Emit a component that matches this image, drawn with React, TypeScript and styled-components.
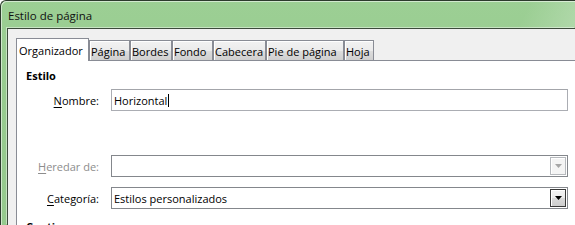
import React from "react";
import styled, { createGlobalStyle } from "styled-components";

const Global = createGlobalStyle`
  html, body { margin: 0; padding: 0; background: #ffffff; }
  body {
    font-family: "Open Sans", "Noto Sans", sans-serif;
    font-size: 11px;
    color: #000;
  }
  * { box-sizing: border-box; }
`;

const Window = styled.div`
  width: 575px;
  height: 225px;
  overflow: hidden;
  display: flex;
  flex-direction: column;
  border-top: 1px solid #2c3a2c;
  border-left: 1px solid #2c3a2c;
  border-top-left-radius: 6px;
  background:
    linear-gradient(115deg, rgba(255,255,255,0) 78%, rgba(255,255,255,0.25) 88%, rgba(255,255,255,0) 96%),
    linear-gradient(180deg, #9ccf94 0%, #97cb8f 40%, #95c98d 100%);
  box-shadow: inset 1px 1px 0 rgba(255, 255, 255, 0.55);
`;

const TitleBar = styled.div`
  height: 27px;
  display: flex;
  align-items: center;
  padding-left: 7px;
  padding-top: 1px;
  font-size: 11.5px;
  color: #101010;
  flex-shrink: 0;
`;

const Client = styled.div`
  flex: 1;
  margin-left: 6px;
  border-top: 1px solid #3c4b3b;
  border-left: 1px solid #3c4b3b;
  background: #f0f0f0;
  padding: 9px 0 0 8px;
  display: flex;
  flex-direction: column;
  min-height: 0;
  box-shadow: -1px -1px 0 rgba(255, 255, 255, 0.45);
`;

const TabRow = styled.div`
  display: flex;
  align-items: flex-end;
  height: 23px;
  border-bottom: 1px solid #898c95;
  flex-shrink: 0;
`;

const Tab = styled.div<{ $active?: boolean; $w: number }>`
  width: ${(p) => p.$w}px;
  height: ${(p) => (p.$active ? 23 : 20)}px;
  margin-bottom: ${(p) => (p.$active ? -1 : 0)}px;
  border: 1px solid #898c95;
  border-bottom: none;
  padding-left: ${(p) => (p.$active ? 2 : 1)}px;
  display: flex;
  align-items: center;
  white-space: nowrap;
  font-size: 11px;
  line-height: 15px;
  position: relative;
  z-index: ${(p) => (p.$active ? 1 : 0)};
  background: ${(p) =>
    p.$active
      ? "#ffffff"
      : "linear-gradient(180deg, #f2f2f2 0%, #ebebeb 50%, #dddddd 51%, #cfcfcf 100%)"};
  box-shadow: ${(p) => (p.$active ? "none" : "inset 1px 1px 0 #ffffff")};
  padding-top: ${(p) => (p.$active ? 0 : 1)}px;
`;

const Panel = styled.div`
  flex: 1;
  background: #ffffff;
  border-left: 1px solid #898c95;
  padding: 7px 7px 0 9px;
  display: flex;
  flex-direction: column;
`;

const Heading = styled.div<{ $mt?: number }>`
  font-weight: 700;
  font-size: 11px;
  line-height: 15px;
  margin-top: ${(p) => p.$mt ?? 0}px;
`;

const Row = styled.div<{ $mt: number }>`
  display: flex;
  align-items: center;
  margin-top: ${(p) => p.$mt}px;
  height: 22px;
`;

const Label = styled.div<{ $disabled?: boolean }>`
  width: 73px;
  margin-right: 12px;
  text-align: right;
  font-size: 11px;
  line-height: 15px;
  color: ${(p) => (p.$disabled ? "#8d8d8d" : "#000")};
  white-space: nowrap;
`;

const Key = styled.span`
  text-decoration: underline;
  text-underline-offset: 2px;
`;

const TextInput = styled.div`
  flex: 1;
  height: 22px;
  border: 1px solid #abadb3;
  border-top-color: #a3a5aa;
  display: flex;
  align-items: center;
  padding-left: 2px;
  font-size: 11px;
  line-height: 15px;
`;

const Caret = styled.span`
  display: inline-block;
  width: 1px;
  height: 13px;
  background: #000;
  margin-left: 1px;
`;

const Select = styled.div`
  flex: 1;
  height: 22px;
  border: 1px solid #84878c;
  display: flex;
  align-items: stretch;
  padding: 1px;
`;

const SelectText = styled.div`
  flex: 1;
  display: flex;
  align-items: center;
  padding-left: 1px;
  font-size: 11px;
  line-height: 15px;
`;

const DropButton = styled.div<{ $disabled?: boolean }>`
  width: 16px;
  display: flex;
  align-items: center;
  justify-content: center;
  border: 1px solid ${(p) => (p.$disabled ? "#b6b9bd" : "#3a3a3a")};
  background: ${(p) =>
    p.$disabled
      ? "#f4f4f4"
      : "linear-gradient(180deg, #f4f4f4 0%, #ebebeb 50%, #dadada 51%, #cdcdcd 100%)"};
  box-shadow: inset 1px 1px 0 #ffffff;
`;

const Arrow = ({ color }: { color: string }) => (
  <svg width="7" height="4" viewBox="0 0 7 4">
    <path d="M0 0 H7 L3.5 4 Z" fill={color} />
  </svg>
);

const tabs: { label: string; w: number; active?: boolean }[] = [
  { label: "Organizador", w: 73, active: true },
  { label: "Página", w: 41 },
  { label: "Bordes", w: 42 },
  { label: "Fondo", w: 41 },
  { label: "Cabecera", w: 53 },
  { label: "Pie de página", w: 78 },
  { label: "Hoja", w: 30 },
];

export default function App() {
  return (
    <>
      <Global />
      <Window>
        <TitleBar>Estilo de página</TitleBar>
        <Client>
          <TabRow>
            {tabs.map((t) => (
              <Tab key={t.label} $active={t.active} $w={t.w}>
                {t.label}
              </Tab>
            ))}
          </TabRow>
          <Panel>
            <Heading>Estilo</Heading>
            <Row $mt={6}>
              <Label>
                <Key>N</Key>ombre:
              </Label>
              <TextInput>
                Horizontal
                <Caret />
              </TextInput>
            </Row>
            <Row $mt={44}>
              <Label $disabled>
                <Key>H</Key>eredar de:
              </Label>
              <Select>
                <SelectText />
                <DropButton $disabled>
                  <Arrow color="#a6a6a6" />
                </DropButton>
              </Select>
            </Row>
            <Row $mt={10}>
              <Label>
                <Key>C</Key>ategoría:
              </Label>
              <Select>
                <SelectText>Estilos personalizados</SelectText>
                <DropButton>
                  <Arrow color="#000000" />
                </DropButton>
              </Select>
            </Row>
            <Heading $mt={10}>Contiene</Heading>
          </Panel>
        </Client>
      </Window>
    </>
  );
}
